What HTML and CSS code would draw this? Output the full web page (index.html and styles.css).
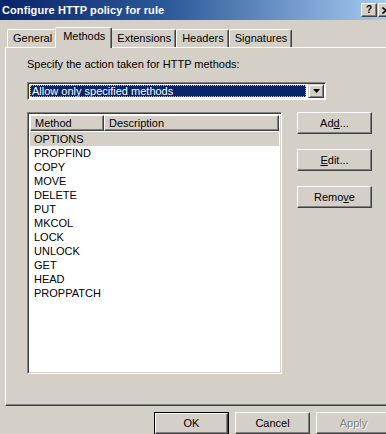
FILE: index.html
```html
<!DOCTYPE html>
<html>
<head>
<meta charset="utf-8">
<link rel="stylesheet" href="styles.css">
</head>
<body>
<div class="window">
  <div class="titlebar">
    <span class="title">Configure HTTP policy for rule</span>
    <div class="caption-btns">
      <span class="cbtn">?</span>
      <span class="cbtn"><svg width="8" height="7" viewBox="0 0 8 7"><path d="M0.5 0.5l7 6M7.5 0.5l-7 6" stroke="#000" stroke-width="1.6"/></svg></span>
    </div>
  </div>

  <div class="tabs">
    <div class="tab first">General</div>
    <div class="tab active">Methods</div>
    <div class="tab">Extensions</div>
    <div class="tab">Headers</div>
    <div class="tab">Signatures</div>
  </div>

  <div class="panel">
    <div class="label">Specify the action taken for HTTP methods:</div>
    <div class="combo">
      <div class="combo-val"><span>Allow only specified methods</span></div>
      <div class="combo-btn">
        <svg width="7" height="4" viewBox="0 0 7 4"><path d="M0 0h7L3.5 4z" fill="#000"/></svg>
      </div>
    </div>

    <div class="list-area">
      <div class="listview">
        <div class="lv-header">
          <div class="hcell h1">Method</div>
          <div class="hcell h2">Description</div>
        </div>
        <div class="lv-body">
          <div class="item sel">OPTIONS</div>
          <div class="item">PROPFIND</div>
          <div class="item">COPY</div>
          <div class="item">MOVE</div>
          <div class="item">DELETE</div>
          <div class="item">PUT</div>
          <div class="item">MKCOL</div>
          <div class="item">LOCK</div>
          <div class="item">UNLOCK</div>
          <div class="item">GET</div>
          <div class="item">HEAD</div>
          <div class="item">PROPPATCH</div>
        </div>
      </div>
      <div class="side-btns">
        <div class="btn">Ad<u>d</u>...</div>
        <div class="btn"><u>E</u>dit...</div>
        <div class="btn">Remo<u>v</u>e</div>
      </div>
    </div>
  </div>

  <div class="footer">
    <div class="btn default"><span>OK</span></div>
    <div class="btn">Cancel</div>
    <div class="btn disabled">Apply</div>
  </div>
</div>
</body>
</html>
```

FILE: styles.css
```css
html, body {
  margin: 0;
  padding: 0;
}
body {
  width: 386px;
  height: 434px;
  overflow: hidden;
  background: #d4d0c8;
  font-family: Tahoma, "Liberation Sans", Arial, sans-serif;
  font-size: 11px;
  color: #000;
}
.window {
  width: 420px;
}

/* Title bar */
.titlebar {
  height: 20px;
  display: flex;
  align-items: center;
  justify-content: space-between;
  background: linear-gradient(to right, #0a246a 0px, #2d5a9a 170px, #a6caf0 386px);
  width: 386px;
  overflow: hidden;
}
.title {
  color: #fff;
  font-weight: bold;
  font-size: 11px;
  padding-left: 2px;
  letter-spacing: 0.1px;
}
.caption-btns {
  display: flex;
  gap: 1px;
  margin-right: -8px;
}
.cbtn {
  width: 14px;
  height: 12px;
  background: #d4d0c8;
  border: 1px solid;
  border-color: #fff #404040 #404040 #fff;
  box-shadow: inset -1px -1px #808080;
  font-weight: bold;
  font-size: 10px;
  line-height: 12px;
  text-align: center;
  display: flex;
  align-items: center;
  justify-content: center;
}

/* Tabs */
.tabs {
  display: flex;
  padding: 7px 0 0 7px;
  height: 20px;
  position: relative;
  z-index: 1;
}
.tab {
  margin-top: 2px;
  height: 18px;
  box-sizing: border-box;
  padding: 0 4px 0 5px;
  line-height: 16px;
  border-top: 1px solid #fff;
  border-left: 1px solid #fff;
  border-right: 1px solid #404040;
  box-shadow: inset -1px 0 #808080;
  border-radius: 2px 2px 0 0;
  background: #d4d0c8;
}
.tab.active {
  margin-top: 0;
  height: 21px;
  margin-left: -2px;
  margin-right: -1px;
  padding: 0 6px 0 7px;
  line-height: 17px;
  position: relative;
  z-index: 2;
}

/* Panel */
.panel {
  margin-left: 5px;
  height: 359px;
  box-sizing: border-box;
  border-top: 1px solid #fff;
  border-left: 1px solid #fff;
  border-bottom: 1px solid #404040;
  box-shadow: inset 0 -1px #808080;
  padding: 10px 0 0 21px;
}
.label {
  height: 13px;
  line-height: 13px;
}

/* Combo */
.combo {
  margin-top: 11px;
  width: 299px;
  height: 18px;
  box-sizing: border-box;
  border: 1px solid;
  border-color: #808080 #fff #fff #808080;
  box-shadow: inset 1px 1px #404040;
  background: #fff;
  display: flex;
  padding: 1px;
}
.combo-val {
  flex: 1;
  padding: 1px 2px 1px 1px;
  background: #fff;
}
.combo-val span {
  display: block;
  height: 12px;
  line-height: 12px;
  background: #0a246a;
  color: #fff;
  padding-left: 2px;
  outline: 1px dotted #c8c070;
  outline-offset: -1px;
}
.combo-btn {
  width: 16px;
  box-sizing: border-box;
  border: 1px solid;
  border-color: #d4d0c8 #404040 #404040 #d4d0c8;
  box-shadow: inset 1px 1px #fff, inset -1px -1px #808080;
  background: #d4d0c8;
  display: flex;
  align-items: center;
  justify-content: center;
}

/* List area */
.list-area {
  display: flex;
  margin-top: 12px;
  gap: 15px;
}
.listview {
  width: 255px;
  height: 262px;
  box-sizing: border-box;
  border: 1px solid;
  border-color: #808080 #fff #fff #808080;
  box-shadow: inset 1px 1px #404040, inset -1px -1px #d4d0c8;
  background: #fff;
  padding: 2px;
}
.lv-header {
  display: flex;
  height: 16px;
}
.hcell {
  box-sizing: border-box;
  height: 16px;
  line-height: 14px;
  padding-left: 4px;
  background: #d4d0c8;
  border: 1px solid;
  border-color: #fff #404040 #404040 #fff;
  box-shadow: inset -1px -1px #808080;
}
.h1 { width: 74px; }
.h2 { flex: 1; }
.lv-body {
  padding-top: 1px;
}
.item {
  height: 14px;
  line-height: 14px;
  padding-left: 4px;
}
.item.sel {
  background: #d4d0c8;
}

/* Buttons */
.side-btns {
  display: flex;
  flex-direction: column;
  gap: 15px;
}
.btn {
  width: 75px;
  height: 22px;
  box-sizing: border-box;
  border: 1px solid;
  border-color: #fff #404040 #404040 #fff;
  box-shadow: inset -1px -1px #808080;
  background: #d4d0c8;
  text-align: center;
  line-height: 20px;
}
.btn u {
  text-decoration-thickness: 1px;
  text-underline-offset: 1px;
}
.footer {
  display: flex;
  gap: 6px;
  padding: 6px 0 0 154px;
}
.btn.default {
  border: 1px solid #000;
  box-shadow: none;
  height: 23px;
  padding: 0;
}
.btn.default span {
  display: block;
  height: 21px;
  box-sizing: border-box;
  border: 1px solid;
  border-color: #fff #404040 #404040 #fff;
  box-shadow: inset -1px -1px #808080;
  line-height: 19px;
}
.btn.disabled {
  color: #808080;
  text-shadow: 1px 1px #fff;
}
```
